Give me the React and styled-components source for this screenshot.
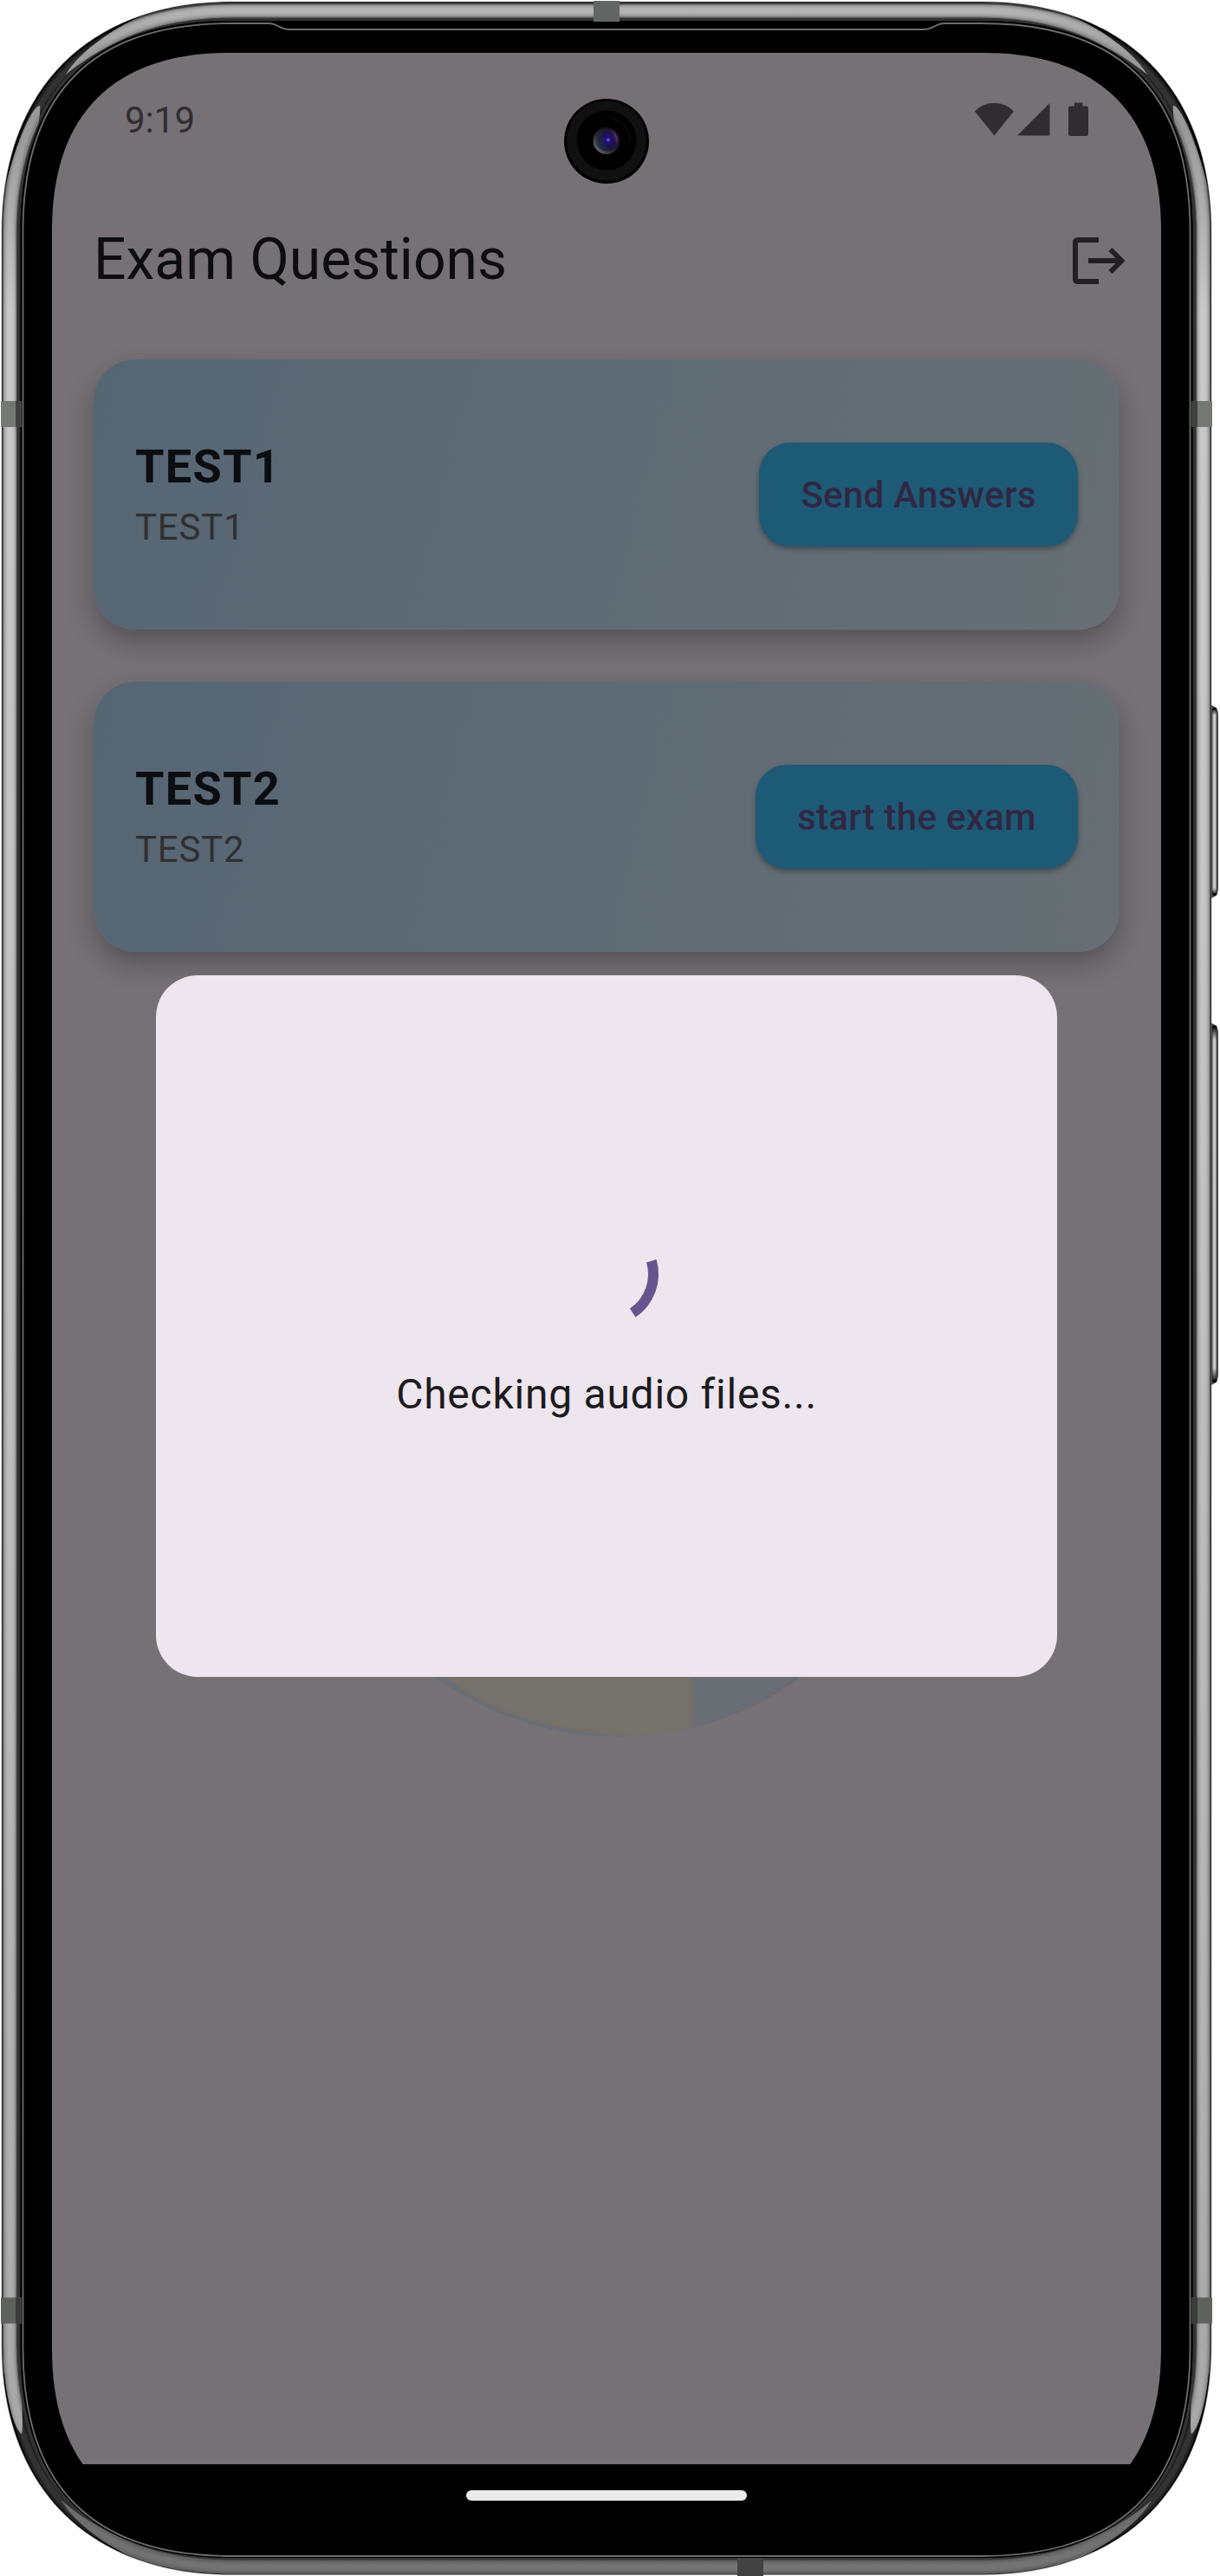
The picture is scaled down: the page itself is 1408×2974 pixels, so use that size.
import React from "react";
import styled, { createGlobalStyle } from "styled-components";

const GlobalStyle = createGlobalStyle`
  *, *::before, *::after { box-sizing: border-box; }
  html, body { margin: 0; padding: 0; background: #fff; }
  body { font-family: Roboto, "Liberation Sans", sans-serif; }
`;

const Stage = styled.main`
  position: relative;
  width: 1408px;
  height: 2974px;
  padding: 61px 0 0 60px;
  overflow: hidden;
`;

const Hardware = styled.svg`
  position: absolute;
  inset: 0;
  z-index: 0;
`;

const Screen = styled.div`
  position: relative;
  z-index: 1;
  display: flex;
  flex-direction: column;
  width: 1280px;
  height: 2856px;
  background: #000;
  clip-path: path("M0 205C0 71 71 0 205 0H1075C1209 0 1280 71 1280 205V2651C1280 2785 1209 2856 1075 2856H205C71 2856 0 2785 0 2651Z");
`;

const AppSurface = styled.section`
  position: relative;
  flex: 1;
  display: flex;
  flex-direction: column;
  background: #767175;
  overflow: hidden;
`;

const StatusBar = styled.header`
  display: flex;
  justify-content: space-between;
  align-items: flex-start;
  height: 156px;
  padding: 53px 84px 0 84px;
`;

const Clock = styled.time`
  font-size: 42px;
  line-height: 50px;
  color: #302d31;
`;

const StatusIcons = styled.svg`
  display: block;
  width: 132px;
  height: 40px;
  margin-top: 4px;
`;

const Toolbar = styled.div`
  display: flex;
  align-items: center;
  justify-content: space-between;
  height: 168px;
  padding: 0 39px 0 48px;
`;

const Title = styled.h1`
  margin: 0;
  padding-bottom: 3px;
  font-size: 66px;
  line-height: 84px;
  font-weight: 400;
  color: #0d0d0f;
`;

const IconButton = styled.button`
  display: flex;
  padding: 0;
  border: 0;
  background: none;
`;

const ExamList = styled.ul`
  position: relative;
  display: flex;
  flex-direction: column;
  gap: 60px;
  margin: 0;
  padding: 30px 48px;
  list-style: none;
`;

const ExamCard = styled.li`
  display: flex;
  align-items: center;
  justify-content: space-between;
  height: 312px;
  padding: 0 48px;
  border-radius: 48px;
  background: linear-gradient(104.76deg, #556673 0%, #5f6b74 50%, #676f74 100%);
  box-shadow: 0 14px 30px rgba(0, 0, 0, 0.28);
`;

const ExamText = styled.div`
  display: flex;
  flex-direction: column;
`;

const ExamName = styled.span`
  font-size: 54px;
  line-height: 74px;
  font-weight: 700;
  letter-spacing: 1.3px;
  color: #0b0e10;
`;

const ExamDetail = styled.span`
  font-size: 42px;
  line-height: 65px;
  letter-spacing: 0.75px;
  color: #2f3031;
`;

const ExamAction = styled.button`
  height: 120px;
  padding: 2px 48px 0;
  border: 0;
  border-radius: 36px;
  background: #1d5a76;
  color: #312742;
  font: 500 42px/60px Roboto, "Liberation Sans", sans-serif;
  letter-spacing: 0.3px;
  box-shadow: 0 3px 6px rgba(0, 0, 0, 0.32);
`;

const Watermark = styled.svg`
  position: absolute;
  left: 300px;
  top: 1240px;
`;

const Dialog = styled.div`
  position: absolute;
  left: 120px;
  top: 1065px;
  width: 1040px;
  height: 810px;
  display: flex;
  flex-direction: column;
  align-items: center;
  justify-content: center;
  gap: 48px;
  border-radius: 48px;
  background: #ede6ee;
`;

const Spinner = styled.svg`
  display: block;
  overflow: visible;
`;

const DialogText = styled.p`
  margin: 0;
  font-size: 48px;
  line-height: 73px;
  letter-spacing: 0.75px;
  color: #1d1b20;
`;

const NavigationBar = styled.footer`
  display: flex;
  justify-content: center;
  align-items: flex-start;
  height: 72px;
  padding-top: 30px;
  background: #000;
`;

const HomeHandle = styled.div`
  width: 324px;
  height: 12px;
  border-radius: 6px;
  background: #ebebeb;
`;

const CameraLens = styled.svg`
  position: absolute;
  left: 590px;
  top: 52px;
`;

function squircle(x, y, r, b, L, k) {
  const c = L - k;
  return `M${x} ${y + L}C${x} ${y + c} ${x + c} ${y} ${x + L} ${y}H${r - L}C${r - c} ${y} ${r} ${y + c} ${r} ${y + L}V${b - L}C${r} ${b - c} ${r - c} ${b} ${r - L} ${b}H${x + L}C${x + c} ${b} ${x} ${b - c} ${x} ${b - L}Z`;
}

const BODY = squircle(2, 2, 1398, 2972.5, 265, 164);
const EDGE = squircle(3.5, 3.5, 1396.5, 2971, 263, 163);
const BAND = squircle(11.5, 12.5, 1388.5, 2963.5, 256, 162);
const INNER = squircle(21.5, 22, 1378.5, 2955, 245, 161);

const GLASS_LINE =
  "M26.5 267C26.5 107 107 27 267 27H310C320 27 323 34 334 34H1066C1077 34 1080 27 1090 27H1133C1293 27 1373.5 107 1373.5 267V2711C1373.5 2871 1293 2951 1133 2951H267C107 2951 26.5 2871 26.5 2711Z";

const BAND_LAYERS = [
  [16, 0.5],
  [14, 0.5],
  [10, 0.45],
  [6, 0.4],
];

const SIDE_KEYS = [
  [813, 225],
  [1180, 420],
];

function PhoneHardware() {
  return (
    <Hardware width="1408" height="2974" viewBox="0 0 1408 2974" fill="none" aria-hidden="true">
      <defs>
        <linearGradient id="metal" gradientUnits="userSpaceOnUse" x1="0" y1="0" x2="0" y2="2974">
          <stop offset="0" stopColor="#c4c4c4" />
          <stop offset="0.025" stopColor="#a2a2a2" />
          <stop offset="0.05" stopColor="#a2a2a2" />
          <stop offset="0.12" stopColor="#d6d6d6" />
          <stop offset="0.5" stopColor="#cdcdcd" />
          <stop offset="0.88" stopColor="#b8b8b8" />
          <stop offset="0.94" stopColor="#b2b2b2" />
          <stop offset="0.968" stopColor="#6f6f6f" />
          <stop offset="1" stopColor="#7b7b7b" />
        </linearGradient>
        <clipPath id="shine">
          <path d="M76 86C92 60 135 25 200 4V0H1200V4C1265 25 1308 60 1324 86C1290 58 1240 30 1170 24V44H230V24C160 30 110 58 76 86Z" />
          <path d="M46 122C38 122 20 160 6 215H0V2740H5C9 2780 18 2805 25 2810C27 2800 25 2770 24 2740V215C29 180 48 150 46 122Z" />
          <path d="M1354 122C1362 122 1380 160 1394 215H1400V2740H1395C1391 2780 1382 2805 1375 2810C1373 2800 1375 2770 1376 2740V215C1371 180 1352 150 1354 122Z" />
          <path d="M71 2887C90 2918 135 2950 200 2972V2974H1200V2972C1265 2950 1310 2918 1329 2887C1290 2920 1240 2945 1170 2953V2935H230V2953C160 2945 110 2920 71 2887Z" />
        </clipPath>
        <linearGradient id="key" x1="0" y1="0" x2="1" y2="0">
          <stop offset="0" stopColor="#6b6b6b" />
          <stop offset="0.35" stopColor="#d2d2d2" />
          <stop offset="0.7" stopColor="#c4c4c4" />
          <stop offset="1" stopColor="#3c3c3c" />
        </linearGradient>
        <linearGradient id="keyEnds" x1="0" y1="0" x2="0" y2="1">
          <stop offset="0" stopColor="#000" />
          <stop offset="0.04" stopColor="#000" stopOpacity="0" />
          <stop offset="0.96" stopColor="#000" stopOpacity="0" />
          <stop offset="1" stopColor="#000" />
        </linearGradient>
      </defs>

      {SIDE_KEYS.map(([y, h]) => (
        <g key={y}>
          <path
            d={`M1396 ${y}L1402 ${y + 3}Q1406 ${y + 4} 1406 ${y + 14}V${y + h - 14}Q1406 ${y + h - 4} 1402 ${y + h - 3}L1396 ${y + h}Z`}
            fill="#4a4a4a"
          />
          <rect x="1399" y={y + 7} width="5.5" height={h - 14} rx="2" fill="url(#key)" />
          <rect x="1399" y={y + 4} width="5" height={h - 8} rx="2" fill="url(#keyEnds)" />
        </g>
      ))}

      <path d={BODY} fill="#000" stroke="#8a8a8a" strokeOpacity="0.5" strokeWidth="1" />
      <path d={BAND} stroke="#202020" strokeWidth="13" />
      <path d={BAND} stroke="#323232" strokeWidth="7" />
      <path d={INNER} stroke="#333" strokeWidth="4" />
      <g clipPath="url(#shine)">
        <path d={EDGE} stroke="#3a3a3a" strokeWidth="2" />
        {BAND_LAYERS.map(([w, o]) => (
          <path key={w} d={BAND} stroke="url(#metal)" strokeWidth={w} strokeOpacity={o} />
        ))}
      </g>
      <path d={squircle(23.5, 24, 1376.5, 2953, 243, 161)} fill="#000" />
      <path d={GLASS_LINE} stroke="#6c6c6c" strokeWidth="1.8" />

      <rect x="685" y="1" width="30" height="24" fill="#616563" />
      <rect x="1" y="463" width="24" height="30" fill="#747774" />
      <rect x="1375" y="463" width="24" height="30" fill="#747774" />
      <rect x="1" y="2652.5" width="24" height="30" fill="#5e615e" />
      <rect x="1375" y="2652.5" width="24" height="30" fill="#5e615e" />
      <rect x="18" y="463" width="7" height="30" fill="#3f413f" />
      <rect x="1375" y="463" width="7" height="30" fill="#3f413f" />
      <rect x="18" y="2652.5" width="7" height="30" fill="#3a3c3a" />
      <rect x="1375" y="2652.5" width="7" height="30" fill="#3a3c3a" />
      <rect x="851" y="2953" width="30" height="21" fill="#424242" />
    </Hardware>
  );
}

function LogoutIcon() {
  return (
    <svg width="72" height="72" viewBox="0 0 72 72" fill="none" stroke="#222024" aria-label="Log out">
      <path d="M39 12H15Q12 12 12 15V57Q12 60 15 60H39" strokeWidth="6" />
      <path d="M27 36H64M52.5 23L65.5 36L52.5 49" strokeWidth="5.8" />
    </svg>
  );
}

function SystemIcons() {
  return (
    <StatusIcons viewBox="0 0 132 40" fill="#302d31" aria-hidden="true">
      <path d="M1 10.5Q9.5 1 23.5 1T46 10.5L23.5 38.5Z" />
      <path d="M50 38.5L87.5 1V38.5Z" />
      <path d="M116 0.5H125.5V4.5H129.5Q132 4.5 132 7V36.5Q132 39 129.5 39H111.5Q109 39 109 36.5V7Q109 4.5 111.5 4.5H116Z" />
    </StatusIcons>
  );
}

function Camera() {
  return (
    <CameraLens width="100" height="100" viewBox="0 0 100 100" aria-hidden="true">
      <defs>
        <radialGradient id="lens" cx="0.54" cy="0.48" r="0.55">
          <stop offset="0" stopColor="#3b24b0" />
          <stop offset="0.22" stopColor="#1f0f72" />
          <stop offset="0.6" stopColor="#17123e" />
          <stop offset="1" stopColor="#141a26" />
        </radialGradient>
        <linearGradient id="rim" x1="0.1" y1="0.9" x2="0.9" y2="0.1">
          <stop offset="0" stopColor="#6a6a6c" />
          <stop offset="0.4" stopColor="#252528" />
          <stop offset="1" stopColor="#120e18" />
        </linearGradient>
        <linearGradient id="tint" x1="0" y1="0.6" x2="1" y2="0.2">
          <stop offset="0" stopColor="#2b4650" stopOpacity="0.75" />
          <stop offset="0.5" stopColor="#1f1d58" stopOpacity="0.15" />
          <stop offset="0.75" stopColor="#2c0f4a" stopOpacity="0.7" />
          <stop offset="1" stopColor="#8c4f9c" stopOpacity="0.85" />
        </linearGradient>
      </defs>
      <circle cx="50" cy="50" r="49" fill="#000" />
      <circle cx="50" cy="49.5" r="46" fill="#101010" />
      <circle cx="50" cy="49" r="34.5" fill="#000" />
      <path d="M53 23A27 27 0 0 1 77 50" fill="none" stroke="#090909" strokeWidth="2" />
      <circle cx="50" cy="49.5" r="15.5" fill="url(#rim)" />
      <circle cx="50.5" cy="49" r="12.5" fill="url(#lens)" />
      <circle cx="50.5" cy="49" r="12.5" fill="url(#tint)" />
      <circle cx="52" cy="48.5" r="2" fill="#5a3cf0" />
    </CameraLens>
  );
}

function LogoWatermark() {
  return (
    <Watermark width="720" height="720" viewBox="0 0 720 720" aria-hidden="true">
      <defs>
        <clipPath id="disc">
          <circle cx="353" cy="346" r="358" />
        </clipPath>
      </defs>
      <g clipPath="url(#disc)">
        <circle cx="353" cy="346" r="358" fill="#6a6e75" />
        <path d="M158 636C215 684 310 703 400 703L439 697L435 560H158Z" fill="#75726b" stroke="#757169" strokeWidth="3" />
        <path d="M439 697Q520 676 580 622" fill="none" stroke="#6c6c70" strokeWidth="8" />
        <path d="M435 560L439 697" stroke="#72706a" strokeWidth="5" />
      </g>
    </Watermark>
  );
}

const EXAMS = [
  { name: "TEST1", detail: "TEST1", action: "Send Answers" },
  { name: "TEST2", detail: "TEST2", action: "start the exam" },
];

export default function App() {
  return (
    <Stage>
      <GlobalStyle />
      <PhoneHardware />
      <Screen>
        <AppSurface>
          <StatusBar>
            <Clock>9:19</Clock>
            <SystemIcons />
          </StatusBar>
          <Toolbar>
            <Title>Exam Questions</Title>
            <IconButton>
              <LogoutIcon />
            </IconButton>
          </Toolbar>
          <LogoWatermark />
          <ExamList>
            {EXAMS.map((exam) => (
              <ExamCard key={exam.name}>
                <ExamText>
                  <ExamName>{exam.name}</ExamName>
                  <ExamDetail>{exam.detail}</ExamDetail>
                </ExamText>
                <ExamAction>{exam.action}</ExamAction>
              </ExamCard>
            ))}
          </ExamList>
          <Dialog role="dialog">
            <Spinner width="108" height="108" viewBox="0 0 108 108" fill="none">
              <path d="M105.8 38.7A54 54 0 0 1 84.2 98.8" stroke="#68548e" strokeWidth="12" />
            </Spinner>
            <DialogText>Checking audio files...</DialogText>
          </Dialog>
        </AppSurface>
        <NavigationBar>
          <HomeHandle />
        </NavigationBar>
        <Camera />
      </Screen>
    </Stage>
  );
}
